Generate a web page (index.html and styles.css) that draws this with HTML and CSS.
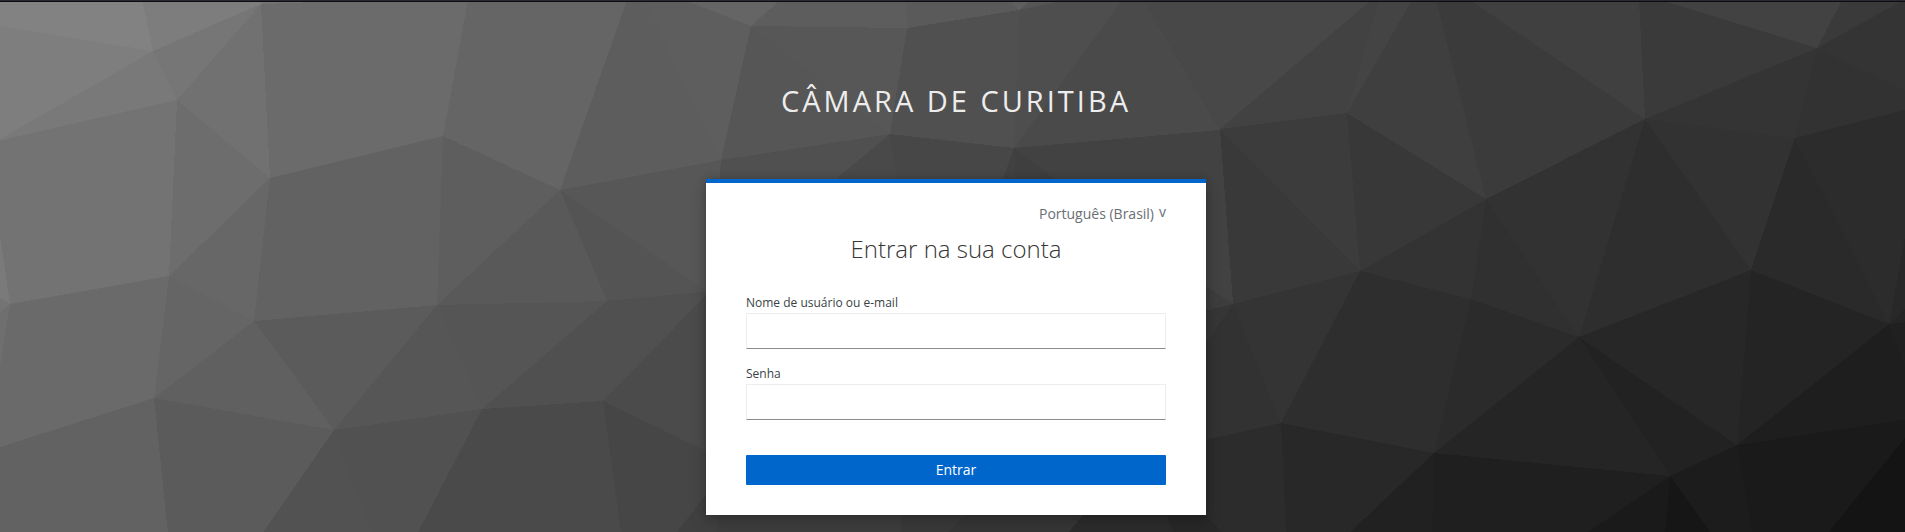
FILE: index.html
```html
<!DOCTYPE html>
<html lang="pt-BR">
<head>
<meta charset="utf-8">
<title>Entrar - Câmara de Curitiba</title>
<link rel="stylesheet" href="styles.css">
</head>
<body>
<svg class="backdrop" viewBox="0 0 1905 532" preserveAspectRatio="none" aria-hidden="true">
  <rect width="1905" height="532" fill="#444"/>
  <!-- left -->
  <polygon fill="#828282" points="0,0 142,0 153,51 0,26"/>
  <polygon fill="#7e7e7e" points="0,26 153,51 -3,141"/>
  <polygon fill="#7d7d7d" points="142,0 268,0 261,4 153,51"/>
  <polygon fill="#767676" points="153,51 261,4 177,100"/>
  <polygon fill="#797979" points="-3,141 153,51 177,100"/>
  <polygon fill="#737373" points="-3,141 177,100 169,276 10,304 -3,220"/>
  <polygon fill="#7a7a7a" points="-3,215 10,304 -3,296"/>
  <polygon fill="#747474" points="-3,296 10,304 -3,315"/>
  <polygon fill="#6f6f6f" points="-3,315 10,304 -3,395"/>
  <polygon fill="#717171" points="261,4 177,100 270,178"/>
  <polygon fill="#6d6d6d" points="177,100 270,178 169,276"/>
  <polygon fill="#676767" points="270,178 169,276 254,321"/>
  <polygon fill="#747474" points="261,4 264,0 430,0"/>
  <polygon fill="#6b6b6b" points="261,4 370,0 468,0 443,136 270,178"/>
  <polygon fill="#626262" points="270,178 443,136 437,305 254,321"/>
  <polygon fill="#6a6a6a" points="10,304 169,276 154,398 -3,448 -3,385"/>
  <polygon fill="#656565" points="169,276 254,321 154,398"/>
  <polygon fill="#606060" points="254,321 154,398 334,430"/>
  <polygon fill="#5b5b5b" points="254,321 437,305 334,430"/>
  <polygon fill="#626262" points="-3,448 154,398 168,534 -3,534"/>
  <polygon fill="#5b5b5b" points="154,398 334,430 262,534 168,534"/>
  <polygon fill="#525252" points="334,430 371,534 262,534"/>
  <polygon fill="#515151" points="334,430 482,409 417,534 371,534"/>
  <polygon fill="#565656" points="437,305 482,409 334,430"/>
  <polygon fill="#555" points="437,305 607,301 482,409"/>
  <polygon fill="#505050" points="607,301 603,401 482,409"/>
  <polygon fill="#4a4a4a" points="482,409 603,401 621,534 417,534"/>
  <polygon fill="#656565" points="468,0 627,0 560,190 443,136"/>
  <polygon fill="#5e5e5e" points="443,136 560,190 437,305"/>
  <polygon fill="#595959" points="560,190 607,301 437,305"/>
  <polygon fill="#5d5d5d" points="627,0 645,0 721,160 560,190"/>
  <polygon fill="#5e5e5e" points="645,0 684,0 751,26 721,160"/>
  <polygon fill="#545454" points="560,190 710,293 607,301"/>
  <polygon fill="#575757" points="560,190 721,160 710,293"/>
  <polygon fill="#505050" points="607,301 710,291 603,401"/>
  <polygon fill="#4b4b4b" points="603,401 710,291 710,453"/>
  <polygon fill="#464646" points="603,401 710,453 710,490 675,534 621,534"/>
  <!-- centre -->
  <polygon fill="#656565" points="684,0 780,0 751,26"/>
  <polygon fill="#5d5d5d" points="780,0 906,0 907,28 751,26"/>
  <polygon fill="#5a5a5a" points="906,0 1008,0 1019,10 907,28"/>
  <polygon fill="#5f5f5f" points="1008,0 1031,0 1019,10"/>
  <polygon fill="#565656" points="1031,0 1066,0 1019,10"/>
  <polygon fill="#575757" points="751,26 907,28 890,134"/>
  <polygon fill="#565656" points="751,26 890,134 721,160"/>
  <polygon fill="#505050" points="907,28 1019,10 1014,148 890,134"/>
  <polygon fill="#4e4e4e" points="1019,10 1066,0 1122,0 1014,148"/>
  <polygon fill="#505050" points="721,160 890,134 830,184 719,184"/>
  <polygon fill="#494949" points="890,134 898,184 830,184"/>
  <polygon fill="#474747" points="890,134 1014,148 1001,184 898,184"/>
  <polygon fill="#414141" points="1014,148 1016,184 1001,184"/>
  <polygon fill="#3f3f3f" points="1014,148 1062,184 1016,184"/>
  <polygon fill="#4a4a4a" points="1122,0 1143,0 1220,130 1014,148"/>
  <polygon fill="#484848" points="1143,0 1371,0 1220,129"/>
  <polygon fill="#424242" points="1014,148 1220,130 1233,304 1200,284 1062,184"/>
  <polygon fill="#424242" points="1371,0 1379,0 1347,113 1220,129"/>
  <polygon fill="#444" points="1379,0 1412,0 1347,113"/>
  <polygon fill="#3c3c3c" points="1220,129 1347,113 1360,271"/>
  <polygon fill="#393939" points="1220,129 1360,271 1233,304"/>
  <polygon fill="#3f3f3f" points="1412,0 1436,0 1486,199 1347,113"/>
  <polygon fill="#383838" points="1347,113 1486,199 1360,271"/>
  <polygon fill="#3d3d3d" points="1200,282 1233,304 1200,312"/>
  <polygon fill="#363636" points="1200,312 1233,304 1200,351"/>
  <polygon fill="#323232" points="1200,351 1233,304 1281,423 1200,441"/>
  <polygon fill="#343434" points="1233,304 1360,271 1281,423"/>
  <polygon fill="#2e2e2e" points="1360,271 1471,299 1434,453 1281,423"/>
  <polygon fill="#333" points="1360,271 1486,199 1471,299"/>
  <polygon fill="#2c2c2c" points="1281,423 1286,534 1224,534 1200,512 1200,441"/>
  <polygon fill="#282828" points="1281,423 1434,453 1348,534 1286,534"/>
  <!-- below the card -->
  <polygon fill="#404040" points="710,490 724,500 716,534 675,534"/>
  <polygon fill="#3e3e3e" points="720,510 901,510 901,534 716,534"/>
  <polygon fill="#3a3a3a" points="901,510 969,510 947,534 901,534"/>
  <polygon fill="#363636" points="969,510 1087,510 1067,534 947,534"/>
  <polygon fill="#2c2c2c" points="1087,510 1165,510 1174,534 1067,534"/>
  <polygon fill="#282828" points="1165,510 1200,510 1225,534 1174,534"/>
  <!-- right -->
  <polygon fill="#3b3b3b" points="1436,0 1470,0 1645,119 1486,199"/>
  <polygon fill="#404040" points="1470,0 1639,0 1645,119"/>
  <polygon fill="#3a3a3a" points="1639,0 1661,0 1817,48 1645,119"/>
  <polygon fill="#424242" points="1661,0 1842,0 1817,48"/>
  <polygon fill="#3a3a3a" points="1842,0 1905,0 1817,48"/>
  <polygon fill="#343434" points="1905,-1 1908,92 1817,48"/>
  <polygon fill="#343434" points="1645,119 1817,48 1795,138"/>
  <polygon fill="#323232" points="1817,48 1908,92 1908,109 1795,138"/>
  <polygon fill="#323232" points="1645,119 1795,138 1751,270"/>
  <polygon fill="#2e2e2e" points="1645,119 1751,270 1579,337"/>
  <polygon fill="#323232" points="1486,199 1645,119 1579,337"/>
  <polygon fill="#303030" points="1486,199 1579,337 1471,299"/>
  <polygon fill="#2b2b2b" points="1471,299 1579,337 1434,453"/>
  <polygon fill="#2a2a2a" points="1795,138 1889,324 1751,270"/>
  <polygon fill="#2c2c2c" points="1795,138 1908,109 1908,220 1889,324"/>
  <polygon fill="#282828" points="1908,220 1908,306 1889,324"/>
  <polygon fill="#242424" points="1908,306 1908,322 1889,324"/>
  <polygon fill="#202020" points="1889,324 1908,322 1908,374"/>
  <polygon fill="#272727" points="1751,270 1737,445 1579,337"/>
  <polygon fill="#242424" points="1751,270 1889,324 1737,445"/>
  <polygon fill="#1e1e1e" points="1889,324 1908,374 1908,419 1737,445"/>
  <polygon fill="#222" points="1579,337 1737,445 1670,476"/>
  <polygon fill="#252525" points="1579,337 1670,476 1434,453"/>
  <polygon fill="#212121" points="1434,453 1432,534 1348,534"/>
  <polygon fill="#1f1f1f" points="1434,453 1670,476 1585,534 1432,534"/>
  <polygon fill="#1a1a1a" points="1670,476 1665,534 1585,534"/>
  <polygon fill="#161616" points="1670,476 1712,534 1665,534"/>
  <polygon fill="#1c1c1c" points="1670,476 1737,445 1752,534 1712,534"/>
  <polygon fill="#1a1a1a" points="1737,445 1908,419 1908,434 1827,534 1752,534"/>
  <polygon fill="#141414" points="1908,434 1908,534 1827,534"/>
</svg>
<div class="page">
  <header class="realm">Câmara de Curitiba</header>
  <main class="card">
    <a class="locale">Português (Brasil)</a>
    <h1 class="title">Entrar na sua conta</h1>
    <form class="form">
      <div class="field">
        <label class="label" for="username">Nome de usuário ou e-mail</label>
        <input class="input" id="username" type="text">
      </div>
      <div class="field">
        <label class="label" for="password">Senha</label>
        <input class="input" id="password" type="password">
      </div>
      <button class="submit" type="button">Entrar</button>
    </form>
  </main>
</div>
</body>
</html>
```
FILE: styles.css
```css
* { box-sizing: border-box; }

body {
  margin: 0;
  height: 532px;
  overflow: hidden;
  background: #444;
  font-family: "Open Sans", "Noto Sans", sans-serif;
}

.backdrop {
  position: absolute;
  inset: 0;
  width: 100%;
  height: 532px;
  z-index: -1;
}

.backdrop polygon { shape-rendering: crispEdges; }

.page {
  height: 532px;
  border-top: 1px solid #2b2a33;
  box-shadow: inset 0 1px 0 #0c0c0d;
  display: flex;
  flex-direction: column;
  align-items: center;
}

.realm {
  height: 178px;
  padding-top: 80px;
  padding-left: 7px;
  font-size: 29px;
  line-height: 40px;
  letter-spacing: 3px;
  text-transform: uppercase;
  color: #ededed;
}

.card {
  width: 500px;
  height: 336px;
  margin-left: 7px;
  padding: 20px 40px 30px;
  border-top: 4px solid #06c;
  background: #fff;
  box-shadow: 0 8px 16px rgba(3, 3, 3, .16), 0 0 8px rgba(3, 3, 3, .2);
  display: flex;
  flex-direction: column;
}

.locale {
  display: flex;
  gap: 5px;
  align-self: flex-end;
  height: 21px;
  font-size: 14px;
  line-height: 21px;
  color: #6a6e73;
}

.locale::after {
  content: "v";
  line-height: 17px;
}

.title {
  margin: 9px 0 0;
  font-size: 24px;
  font-weight: 300;
  line-height: 31px;
  text-align: center;
  color: #363636;
}

.form { margin-top: 31px; }

.field { margin-bottom: 17px; }

.label {
  display: block;
  height: 18px;
  font-size: 12px;
  line-height: 16px;
  color: #393f44;
}

.input {
  display: block;
  width: 100%;
  height: 36px;
  padding: 5px 8px;
  border: 1px solid #ededed;
  border-bottom-color: #8a8d90;
  border-radius: 0;
  background: #fff;
  font: inherit;
  outline: none;
}

.submit {
  display: block;
  width: 100%;
  height: 30px;
  margin-top: 35px;
  padding: 0;
  border: 0;
  border-radius: 1px;
  background: #06c;
  color: #fff;
  font-family: inherit;
  font-size: 14px;
  line-height: 30px;
}
```
